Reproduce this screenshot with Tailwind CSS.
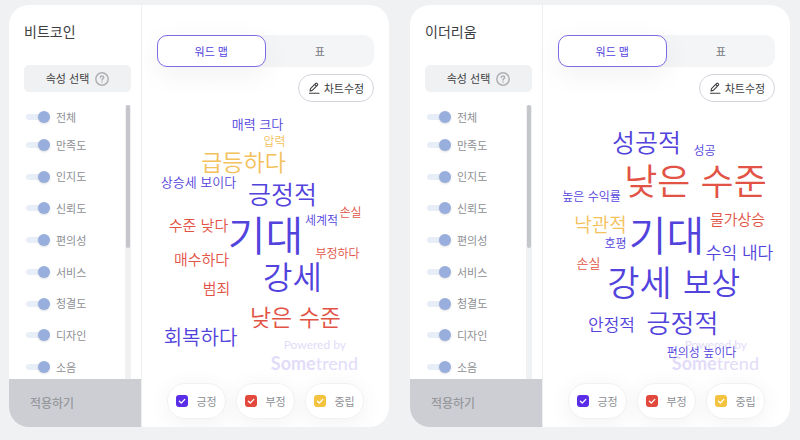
<!DOCTYPE html>
<html lang="ko">
<head>
    <meta charset="UTF-8">
    <meta name="viewport" content="width=device-width, initial-scale=1.0">
    <title>썸트렌드 워드맵</title>
    <script src="https://cdn.jsdelivr.net/npm/@tailwindcss/browser@4"></script>
</head>
<body class="bg-[#f0f1f3] font-['Noto_Sans_CJK_KR',sans-serif]">
    <div id="cards" class="grid min-h-screen grid-cols-2 gap-[21px] pt-[5px] pr-[10px] pb-[13px] pl-[9px]"></div>

    <script>
        const attributes = ['전체', '만족도', '인지도', '신뢰도', '편의성', '서비스', '청결도', '디자인', '소음'];

        const sentiments = [
            { name: '긍정', box: 'bg-[#5a2ee8]' },
            { name: '부정', box: 'bg-[#e3483c]' },
            { name: '중립', box: 'bg-[#f3c33f]' },
        ];

        const tones = {
            pos: 'text-[#5243dd]',
            neg: 'text-[#e25345]',
            neu: 'text-[#f3c25c]',
        };

        // [word, tone, font size, x from centre, y from centre]
        const cards = [
            {
                title: '비트코인',
                words: [
                    ['매력 크다', 'pos', 13, -8, -118],
                    ['압력', 'neu', 12, 9, -100],
                    ['급등하다', 'neu', 23, -22, -80],
                    ['상승세 보이다', 'pos', 13, -67, -60],
                    ['긍정적', 'pos', 25, 17, -48],
                    ['손실', 'neg', 12, 85, -29],
                    ['세계적', 'pos', 12, 56, -21],
                    ['수준 낮다', 'neg', 15, -67, -17],
                    ['기대', 'pos', 41, 0, -8],
                    ['부정하다', 'neg', 12, 72, 12],
                    ['매수하다', 'neg', 15, -64, 17],
                    ['강세', 'pos', 32, 27, 34],
                    ['범죄', 'neg', 15, -49, 46],
                    ['낮은 수준', 'neg', 23, 30, 75],
                    ['회복하다', 'pos', 20, -65, 96],
                ],
            },
            {
                title: '이더리움',
                words: [
                    ['성공적', 'pos', 25, -20, -100],
                    ['성공', 'pos', 12, 38, -91],
                    ['낮은 수준', 'neg', 36, 29, -62],
                    ['높은 수익률', 'pos', 12, -75, -45],
                    ['물가상승', 'neg', 15, 71, -23],
                    ['낙관적', 'neu', 19, -66, -18],
                    ['기대', 'pos', 41, 0, -8],
                    ['호평', 'pos', 12, -51, 2],
                    ['수익 내다', 'pos', 17, 73, 10],
                    ['손실', 'neg', 13, -78, 21],
                    ['강세', 'pos', 35, -27, 39],
                    ['보상', 'pos', 31, 45, 39],
                    ['안정적', 'pos', 17, -55, 82],
                    ['긍정적', 'pos', 26, 16, 81],
                    ['편의성 높이다', 'pos', 12, 35, 111],
                ],
            },
        ];

        const toggle = (name) => `
            <li class="flex flex-1 items-center first:h-6 first:flex-none">
                <label class="flex items-center text-[11px] text-[#8d8f94]">
                    <input type="checkbox" class="peer sr-only" checked>
                    <span class="mr-1.5 flex h-1.5 w-6 items-center justify-end rounded-full bg-[#e8eef8]">
                        <span class="size-3 rounded-full bg-[#98aedc] shadow-sm"></span>
                    </span>
                    ${name}
                </label>
            </li>
        `;

        const word = ([text, tone, size, x, y]) => `
            <span class="absolute -translate-x-1/2 -translate-y-1/2 leading-none font-[350] whitespace-nowrap ${tones[tone]}"
                style="font-size: ${size}px; left: calc(50% + ${x}px); top: calc(50% + ${y}px)">${text}</span>
        `;

        const legend = ({ name, box }) => `
            <label class="flex h-9 w-[59px] items-center justify-center gap-2 rounded-full border border-[#f1f1f3] bg-white text-[11px] text-[#8d8f94] shadow-[0_4px_24px_rgba(0,0,0,0.06)]">
                <input type="checkbox" class="sr-only" checked>
                <span class="flex size-3 items-center justify-center rounded-[3px] ${box}">
                    <svg class="size-3" viewBox="0 0 12 12" fill="none" stroke="#fff" stroke-width="1.3" stroke-linecap="round" stroke-linejoin="round"><path d="M3.4 6.2 5.3 8 8.8 4.4"/></svg>
                </span>
                ${name}
            </label>
        `;

        const card = ({ title, words }) => `
            <section class="flex overflow-hidden rounded-[20px] bg-white">
                <!-- Attribute filter -->
                <aside class="flex w-[133px] shrink-0 flex-col border-r border-[#eeeff1]">
                    <div class="pt-4 pr-2.5 pl-[15px]">
                        <h2 class="text-[14px] leading-5 text-[#3c3e42]">${title}</h2>
                        <button class="mt-6 flex h-[27px] w-full items-center justify-center gap-1.5 rounded-[5px] bg-[#f0f1f3] text-[11px] text-[#3c3e42]">
                            속성 선택
                            <svg class="size-3.5" viewBox="0 0 14 14" fill="none" stroke="#b0b1b4" stroke-width="1.5" stroke-linecap="round">
                                <circle cx="7" cy="7" r="6.2"/>
                                <path d="M5.3 5.6c0-1 .7-1.7 1.7-1.7s1.7.7 1.7 1.6C8.7 6.7 7 6.7 7 8"/>
                                <path d="M7 10v.1"/>
                            </svg>
                        </button>
                    </div>
                    <div class="mt-[13px] flex flex-1 pr-2.5 pl-[17px]">
                        <ul class="-mb-1 flex flex-1 flex-col">${attributes.map(toggle).join('')}</ul>
                        <div class="w-1.5 bg-[#f0f1f2] px-px">
                            <div class="h-[143px] rounded-full bg-[#c5c6cb]"></div>
                        </div>
                    </div>
                    <button class="relative h-12 bg-[#cdced4] pl-[21px] text-left text-[12px] font-medium text-[#96989c]">적용하기</button>
                </aside>

                <!-- Word map -->
                <div class="flex min-w-0 flex-1 flex-col px-[15px] pt-[30px] pb-2">
                    <div class="grid h-8 grid-cols-2 rounded-[10px] bg-[#f4f5f7] text-[11px]">
                        <button class="rounded-[10px] border border-[#7b6ce4] bg-white text-[#5243dd] shadow-[0_8px_30px_rgba(0,0,0,0.06)]">워드 맵</button>
                        <button class="text-[#77797e]">표</button>
                    </div>
                    <button class="mt-[7px] flex h-7 w-[76px] items-center justify-center gap-1 self-end rounded-full border border-[#d3d3dc] bg-white text-[11px] text-[#3c3e42]">
                        <svg class="size-3" viewBox="0 0 12 12" fill="none" stroke="currentColor" stroke-width="1.1" stroke-linecap="round" stroke-linejoin="round">
                            <path d="M2 9 2.5 6.6 7.7 1.4Q8.3.9 8.9 1.4L9.5 2Q10 2.6 9.5 3.2L4.3 8.4ZM6.7 2.5 8.5 4.2"/>
                            <path d="M1.5 11.3h9.5"/>
                        </svg>
                        차트수정
                    </button>
                    <div class="relative min-h-[270px] flex-1">
                        <div class="absolute right-4 bottom-2.5 flex flex-col items-end font-['Lato',sans-serif] text-[#e2dcf9]">
                            <span class="mr-3 text-[12px] leading-4">Powered by</span>
                            <span class="text-[18px] leading-5"><b>Some</b>trend</span>
                        </div>
                        <div class="absolute inset-x-0 top-0 bottom-1">${words.map(word).join('')}</div>
                    </div>
                    <div class="flex justify-center gap-2.5">${sentiments.map(legend).join('')}</div>
                </div>
            </section>
        `;

        document.getElementById('cards').innerHTML = cards.map(card).join('');
    </script>
</body>
</html>
